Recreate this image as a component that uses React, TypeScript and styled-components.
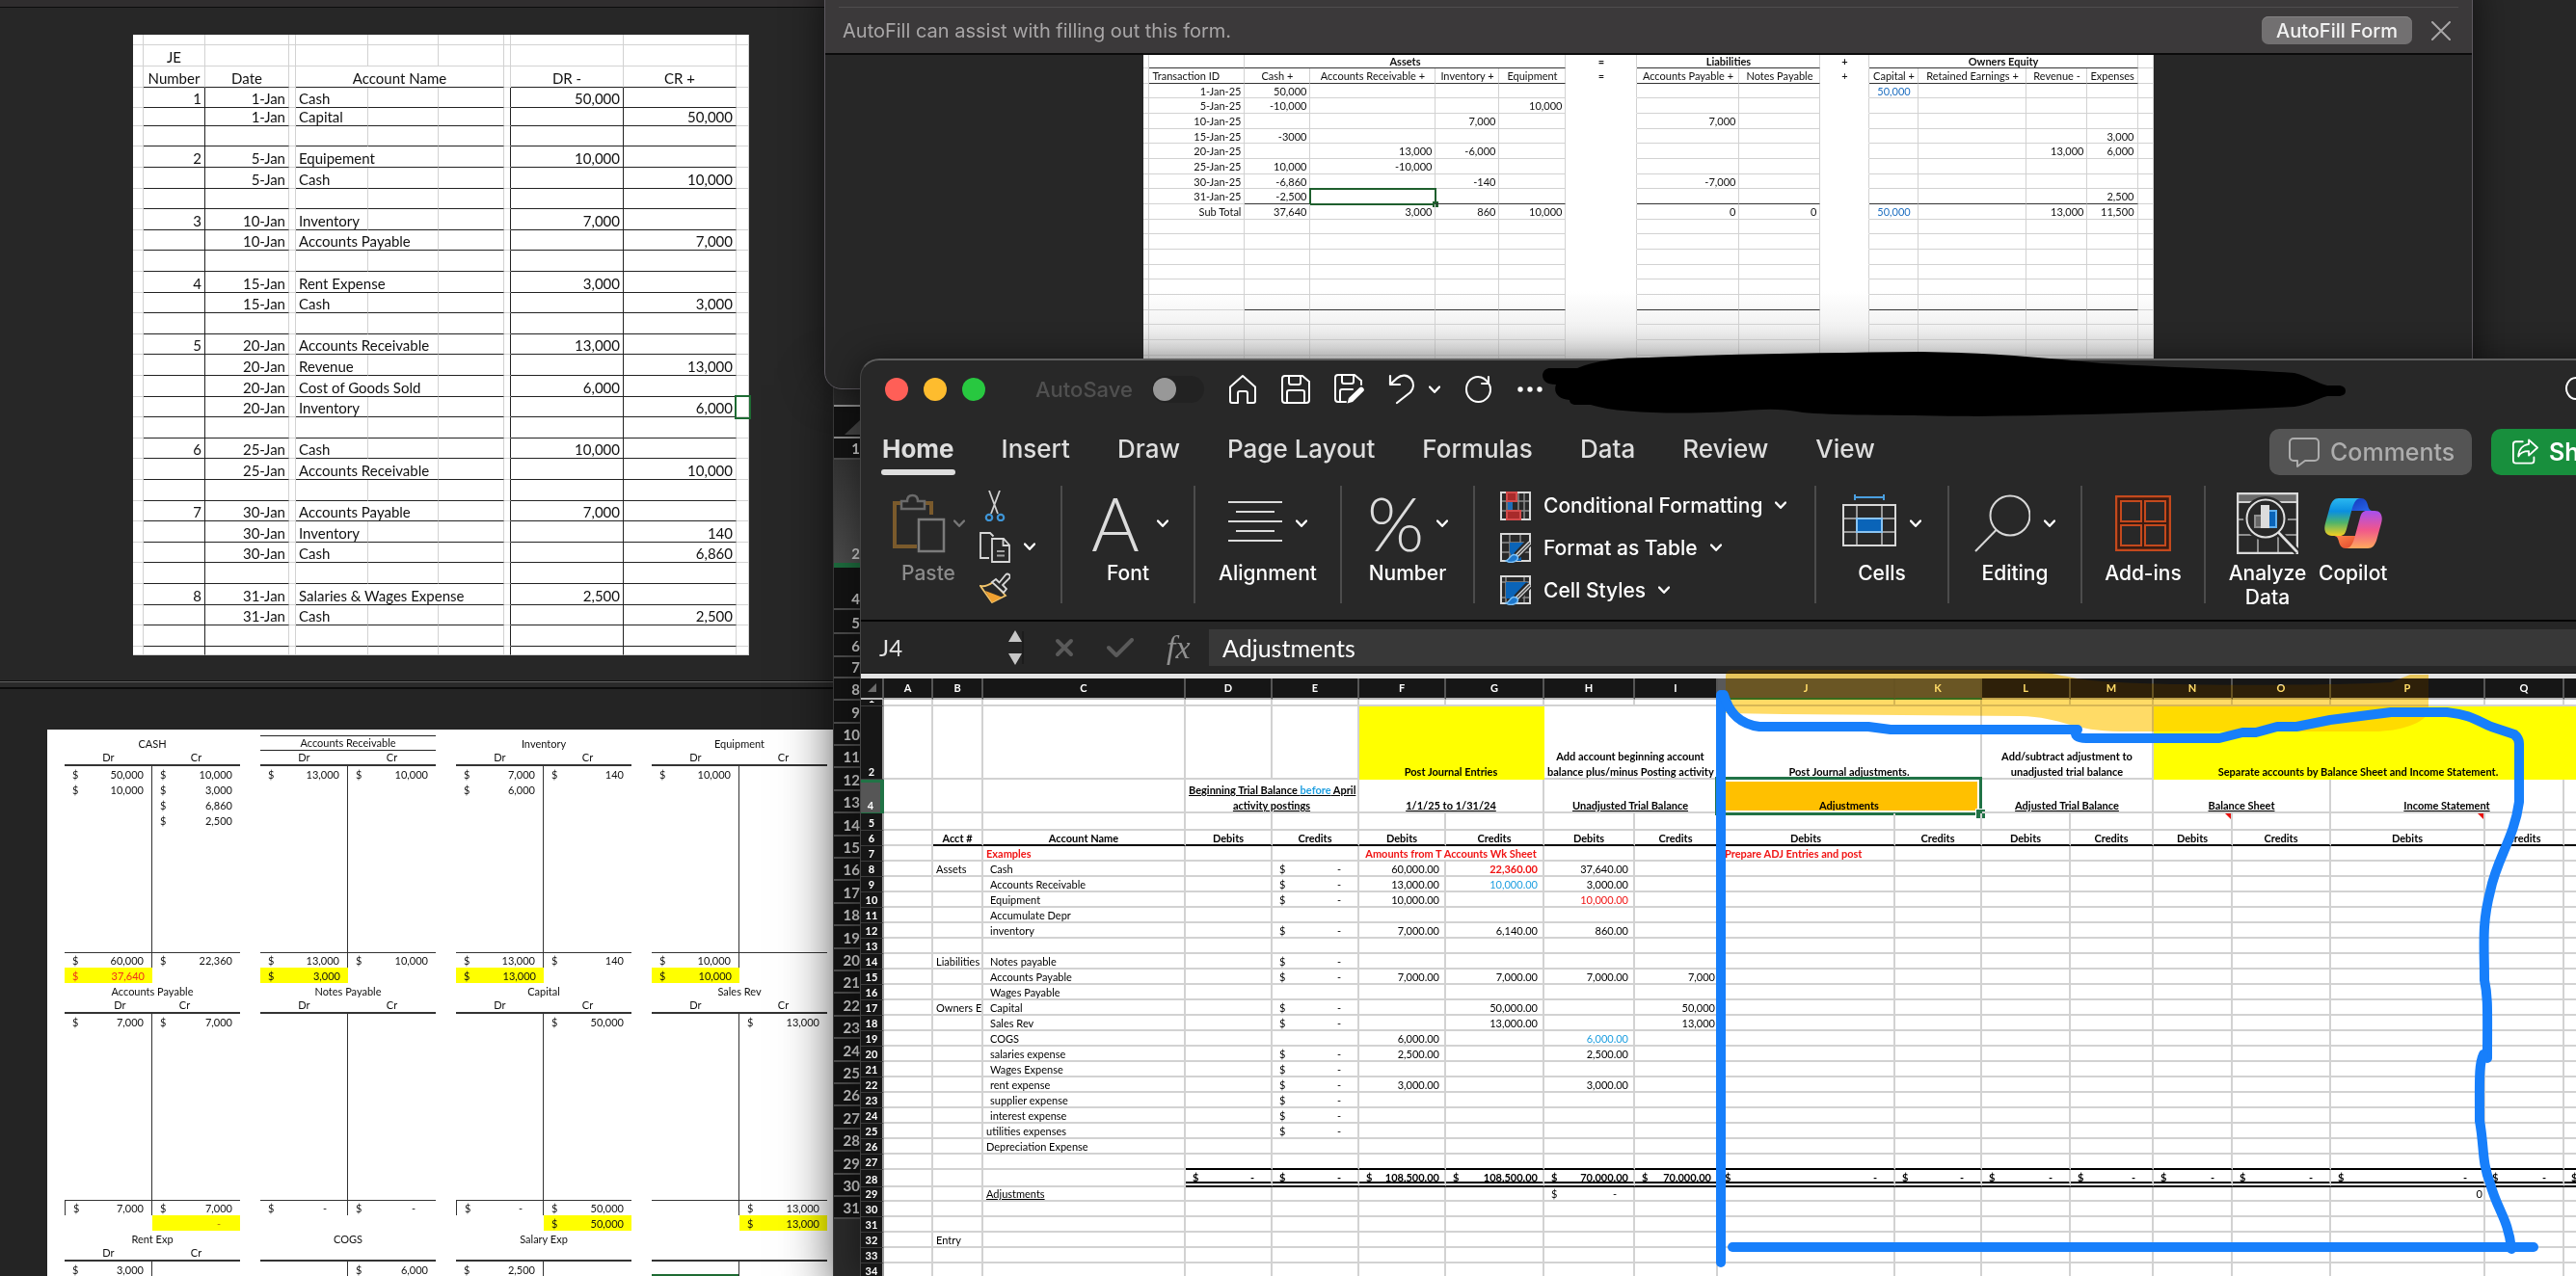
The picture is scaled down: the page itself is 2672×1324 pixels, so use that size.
import React from 'react';
import styled, { createGlobalStyle, css } from 'styled-components';

const UI = `Inter, "Liberation Sans", sans-serif`;
const SHEET = `Lato, "Open Sans", sans-serif`;
const INK = '#111';
const GRID = '#d2d2d2';

const Global = createGlobalStyle`
  *, *::before, *::after { box-sizing: border-box; }
  html, body, #root { margin: 0; height: 100%; }
  body { background: #262626; overflow: hidden; }
  button, input { font: inherit; color: inherit; border: 0; margin: 0; padding: 0; background: none; }
  table { border-collapse: separate; border-spacing: 0; table-layout: fixed; }
  th, td { padding: 0; font-weight: inherit; }
`;

/* ---------- desktop and windows ---------- */

const Desktop = styled.main`
  position: relative;
  width: 100%;
  height: 100vh;
  overflow: hidden;
  background: #272727;
  font-family: ${UI};
`;

const JournalWindow = styled.section`
  position: absolute;
  inset: 0 auto auto 0;
  width: 900px;
  height: 707px;
  padding: 29px 0 0 138px;
  background: #272727;
  border-top: 7px solid #2f2d2e;
  border-bottom: 1px solid #111;
  box-shadow: inset 0 1px 0 #0c0c0c;
`;

const AccountsWindow = styled.section`
  position: absolute;
  top: 707px;
  left: 0;
  width: 880px;
  bottom: 0;
  padding: 49px 0 0 49px;
  background: #242424;
  border-top: 1px solid #626262;
  overflow: hidden;
  &::before {
    content: '';
    position: absolute;
    inset: 0 0 auto 0;
    height: 7px;
    background: #2a2a2a;
    border-bottom: 2px solid #0c0c0c;
  }
`;

const BackSheetWindow = styled.aside`
  position: absolute;
  top: 380px;
  left: 864px;
  width: 200px;
  bottom: 0;
  padding-top: 40px;
  background: #2a2a2a;
  border-left: 1px solid #3a3a3a;
  box-shadow: 0 20px 50px rgba(0, 0, 0, 0.6);
`;

const BrowserWindow = styled.section`
  position: absolute;
  top: -20px;
  left: 855px;
  right: 107px;
  height: 424px;
  padding-top: 19px;
  background: #272727;
  border: 1px solid #5d5960;
  border-radius: 18px;
  overflow: hidden;
  box-shadow: 0 0 40px rgba(0, 0, 0, 0.6);
`;

const ExcelWindow = styled.section`
  position: absolute;
  top: 372px;
  left: 892px;
  right: -60px;
  bottom: 0;
  background: #282828;
  border-top: 2px solid #5f5f5f;
  border-left: 1px solid #444;
  border-radius: 20px 0 0 0;
  box-shadow: 0 0 34px rgba(0, 0, 0, 0.45);
`;

/* ---------- shared table parts ---------- */

const Col = styled.col<{ $w?: number }>`
  width: ${(p) => (p.$w ? `${p.$w}px` : 'auto')};
`;

const Cols = ({ widths }: { widths: (number | undefined)[] }) => (
  <colgroup>
    {widths.map((w, i) => (
      <Col key={i} $w={w} />
    ))}
  </colgroup>
);

/* ---------- journal ---------- */

const JournalTable = styled.table`
  width: 639px;
  background: #fff;
  color: ${INK};
  font: 15px/18px ${SHEET};
  tbody tr { height: 22px; }
  tbody tr:nth-child(5n + 1), tbody tr:nth-child(5n + 3) { height: 21px; }
  tbody tr:nth-child(2) { height: 19px; }
`;

const ThinRow = styled.tr<{ $h: number }>`
  &&&& { height: ${(p) => p.$h}px; }
`;

const JCell = styled.td<{ $dark?: boolean; $right?: boolean; $align?: string; $pick?: boolean }>`
  padding: 0 3px;
  white-space: nowrap;
  vertical-align: bottom;
  text-align: ${(p) => p.$align || 'left'};
  border-bottom: 1px solid ${(p) => (p.$dark ? '#222' : GRID)};
  border-right: 1px solid ${(p) => (p.$right ? '#222' : GRID)};
  outline: ${(p) => (p.$pick ? '2px solid #1e6b33' : 'none')};
`;

const journal: [string, string, string, string, string][] = [
  ['1', '1-Jan', 'Cash', '50,000', ''],
  ['', '1-Jan', 'Capital', '', '50,000'],
  ['', '', '', '', ''],
  ['2', '5-Jan', 'Equipement', '10,000', ''],
  ['', '5-Jan', 'Cash', '', '10,000'],
  ['', '', '', '', ''],
  ['3', '10-Jan', 'Inventory', '7,000', ''],
  ['', '10-Jan', 'Accounts Payable', '', '7,000'],
  ['', '', '', '', ''],
  ['4', '15-Jan', 'Rent Expense', '3,000', ''],
  ['', '15-Jan', 'Cash', '', '3,000'],
  ['', '', '', '', ''],
  ['5', '20-Jan', 'Accounts Receivable', '13,000', ''],
  ['', '20-Jan', 'Revenue', '', '13,000'],
  ['', '20-Jan', 'Cost of Goods Sold', '6,000', ''],
  ['', '20-Jan', 'Inventory', '', '6,000'],
  ['', '', '', '', ''],
  ['6', '25-Jan', 'Cash', '10,000', ''],
  ['', '25-Jan', 'Accounts Receivable', '', '10,000'],
  ['', '', '', '', ''],
  ['7', '30-Jan', 'Accounts Payable', '7,000', ''],
  ['', '30-Jan', 'Inventory', '', '140'],
  ['', '30-Jan', 'Cash', '', '6,860'],
  ['', '', '', '', ''],
  ['8', '31-Jan', 'Salaries & Wages Expense', '2,500', ''],
  ['', '31-Jan', 'Cash', '', '2,500'],
  ['', '', '', '', ''],
];

const nameSpan = (name: string) => (name.length > 20 ? 3 : name.length > 9 ? 2 : 1);

const Journal = () => (
  <JournalTable>
    <Cols widths={[11, 64, 87, 7, 75, 73, 68, 7, 117, 117, 13]} />
    <thead>
      <ThinRow $h={11}>
        {Array.from({ length: 11 }, (_, i) => (
          <JCell key={i} />
        ))}
      </ThinRow>
      <ThinRow $h={22}>
        {Array.from({ length: 11 }, (_, i) => (
          <JCell key={i} $align="center">{i === 1 ? 'JE' : ''}</JCell>
        ))}
      </ThinRow>
      <ThinRow $h={22}>
        <JCell />
        <JCell as="th" $dark $align="center">Number</JCell>
        <JCell as="th" $dark $align="center">Date</JCell>
        <JCell />
        <JCell as="th" $dark $align="center" colSpan={3}>Account Name</JCell>
        <JCell />
        <JCell as="th" $dark $align="center">DR -</JCell>
        <JCell as="th" $dark $align="center">CR +</JCell>
        <JCell />
      </ThinRow>
    </thead>
    <tbody>
      {journal.map(([num, date, name, dr, cr], i) => (
        <tr key={i}>
          <JCell />
          <JCell $dark $right $align="right">{num}</JCell>
          <JCell $dark $align="right">{date}</JCell>
          <JCell />
          <JCell $dark colSpan={nameSpan(name)}>{name}</JCell>
          {nameSpan(name) < 2 && <JCell $dark />}
          {nameSpan(name) < 3 && <JCell $dark />}
          <JCell $right />
          <JCell $dark $right $align="right">{dr}</JCell>
          <JCell $dark $align="right">{cr}</JCell>
          <JCell $pick={i === 15} />
        </tr>
      ))}
      <ThinRow $h={9}>
        <JCell />
        <JCell $right />
        <JCell />
        <JCell />
        <JCell />
        <JCell />
        <JCell />
        <JCell $right />
        <JCell $right />
        <JCell />
        <JCell />
      </ThinRow>
    </tbody>
  </JournalTable>
);

/* ---------- T accounts ---------- */

const Paper = styled.div`
  padding: 6px 0 0 18px;
  min-height: 640px;
  background: #fff;
  color: ${INK};
  font: 11px/15px ${SHEET};
`;

const AccountRow = styled.div`
  display: grid;
  grid-template-columns: repeat(4, 182px);
  column-gap: 21px;
`;

const TTable = styled.table`
  width: 182px;
  tr { height: 16px; }
`;

const TTitle = styled.th<{ $ruled?: boolean }>`
  text-align: center;
  border: 0 solid #222;
  border-width: ${(p) => (p.$ruled ? '1px 0' : 0)};
  line-height: ${(p) => (p.$ruled ? 14 : 15)}px;
`;

const Side = styled.th<{ $near?: boolean }>`
  height: 16px;
  line-height: 14px;
  text-align: center;
  border-bottom: 2px solid #333;
  &:first-child { padding-left: ${(p) => (p.$near ? 24 : 0)}px; }
  &:last-child { padding-right: ${(p) => (p.$near ? 24 : 0)}px; }
`;

const TCell = styled.td<{ $top?: boolean; $left?: boolean; $bare?: boolean; $fill?: boolean; $red?: boolean }>`
  position: relative;
  height: 16px;
  padding: 0 8px;
  border-top: ${(p) => (p.$top ? '1px solid #333' : 0)};
  border-left: ${(p) => (p.$left ? '1px solid #333' : 0)};
  background: ${(p) => (p.$fill ? '#ffff00' : 'none')};
  color: ${(p) => (p.$red ? '#f0301c' : 'inherit')};
  &:first-child { border-right: ${(p) => (p.$bare ? '0' : '1px solid #333')}; }
`;

const Filler = styled.tr<{ $h: number }>`
  && { height: ${(p) => p.$h}px; }
`;

const ActiveCell = styled.i`
  position: absolute;
  inset: 13px 0 auto 0;
  height: 18px;
  border: 2px solid #1e6b33;
`;

const Money = styled.span`
  display: flex;
  justify-content: space-between;
`;

const Amount = ({ v }: { v?: string }) =>
  v ? (
    <Money>
      <span>$</span>
      <span>{v}</span>
    </Money>
  ) : null;

type Account = {
  title: string;
  sides?: boolean;
  near?: boolean;
  ruled?: boolean;
  dr?: string[];
  cr?: string[];
  total?: [string, string];
  edge?: boolean;
  active?: boolean;
  balance?: { side: 0 | 1; v: string; red?: boolean };
};

const Dash = styled.span`
  padding-right: 13px;
`;

const AccountValue = ({ v }: { v?: string }) =>
  v === '-' ? (
    <Money>
      <span>$</span>
      <Dash>-</Dash>
    </Money>
  ) : (
    <Amount v={v} />
  );

const NilBalance = styled.div`
  padding-right: 12px;
  text-align: right;
  color: #b07410;
`;

const TAccount = ({ a, open }: { a: Account; open?: boolean }) => {
  const dr = a.dr || [];
  const cr = a.cr || [];
  const n = Math.max(dr.length, cr.length);
  return (
    <TTable>
      <thead>
        <tr><TTitle colSpan={2} $ruled={a.ruled}>{a.title}</TTitle></tr>
        <tr>
          <Side $near={a.near}>{a.sides === false ? '' : 'Dr'}</Side>
          <Side $near={a.near}>{a.sides === false ? '' : 'Cr'}</Side>
        </tr>
      </thead>
      <tbody>
        {Array.from({ length: n }, (_, i) => (
          <tr key={i}>
            <TCell><Amount v={dr[i]} /></TCell>
            <TCell><Amount v={cr[i]} /></TCell>
          </tr>
        ))}
        <Filler $h={193 - 16 * n}><TCell>{a.active && <ActiveCell />}</TCell><TCell /></Filler>
      </tbody>
      {!open && (
        <tfoot>
          <tr>
            <TCell $top $left={a.edge}><AccountValue v={a.total?.[0]} /></TCell>
            <TCell $top><AccountValue v={a.total?.[1]} /></TCell>
          </tr>
          <Filler $h={15}>
            {([0, 1] as const).map((s) => (
              <TCell key={s} $bare $fill={a.balance?.side === s} $red={a.balance?.red}>
                {a.balance?.side === s && (a.balance.v === '-' ? <NilBalance>-</NilBalance> : <Amount v={a.balance.v} />)}
              </TCell>
            ))}
          </Filler>
        </tfoot>
      )}
    </TTable>
  );
};

const accountRows: Account[][] = [
  [
    { title: 'CASH', dr: ['50,000', '10,000'], cr: ['10,000', '3,000', '6,860', '2,500'], total: ['60,000', '22,360'], balance: { side: 0, v: '37,640', red: true } },
    { title: 'Accounts Receivable', ruled: true, dr: ['13,000'], cr: ['10,000'], total: ['13,000', '10,000'], balance: { side: 0, v: '3,000' } },
    { title: 'Inventory', dr: ['7,000', '6,000'], cr: ['140'], total: ['13,000', '140'], balance: { side: 0, v: '13,000' } },
    { title: 'Equipment', dr: ['10,000'], total: ['10,000', ''], balance: { side: 0, v: '10,000' } },
  ],
  [
    { title: 'Accounts Payable', near: true, dr: ['7,000'], cr: ['7,000'], total: ['7,000', '7,000'], edge: true, balance: { side: 1, v: '-' } },
    { title: 'Notes Payable', total: ['-', '-'] },
    { title: 'Capital', cr: ['50,000'], total: ['-', '50,000'], edge: true, balance: { side: 1, v: '50,000' } },
    { title: 'Sales Rev', cr: ['13,000'], total: ['', '13,000'], balance: { side: 1, v: '13,000' } },
  ],
  [
    { title: 'Rent Exp', dr: ['3,000'] },
    { title: 'COGS', sides: false, cr: ['6,000'] },
    { title: 'Salary Exp', sides: false, dr: ['2,500'] },
    { title: '', sides: false, active: true },
  ],
];

/* ---------- browser ---------- */

const AutoFillBar = styled.div`
  display: flex;
  align-items: center;
  gap: 20px;
  height: 57px;
  padding: 8px 22px 0 18px;
  background: #3b393a;
  border-bottom: 2px solid #0b0b0b;
  color: #a8a6a7;
  font-size: 20px;
  p { flex: 1; margin: 0; }
`;

const BarRule = styled.div`
  height: 1px;
  margin: 7px 14px -8px 14px;
  background: #4f4d4e;
  position: relative;
`;

const AutoFillButton = styled.button`
  height: 29px;
  padding: 0 15px;
  border-radius: 7px;
  background: #727071;
  box-shadow: inset 0 1px 0 #858384;
  color: #f2f2f2;
  font-weight: 500;
  font-size: 20px;
`;

const PageArea = styled.div`
  display: flex;
  justify-content: center;
`;

const LedgerTable = styled.table`
  width: 1047px;
  background: linear-gradient(#fff 75%, #e2e2e2);
  color: ${INK};
  font: 11px/13px ${SHEET};
  tr { height: 16px; }
  tbody tr:nth-child(3n + 1) { height: 15px; }
`;

const LCell = styled.td<{ $align?: string; $dark?: boolean; $bold?: boolean; $open?: boolean; $blue?: boolean }>`
  position: relative;
  padding: 0 3px;
  white-space: nowrap;
  text-align: ${(p) => p.$align || 'right'};
  font-weight: ${(p) => (p.$bold ? 700 : 400)};
  color: ${(p) => (p.$blue ? '#1f6fc0' : 'inherit')};
  border-right: 1px solid ${GRID};
  border-bottom: 1px solid ${(p) => (p.$dark ? '#333' : p.$open ? 'transparent' : GRID)};
`;

const Picked = styled.span`
  position: absolute;
  inset: -1px -2px -2px -1px;
  border: 2px solid #1f5f2e;
  &::after {
    content: '';
    position: absolute;
    right: -4px;
    bottom: -4px;
    width: 6px;
    height: 6px;
    background: #1f5f2e;
  }
`;

const ledgerHeads = ['', 'Transaction ID', 'Cash +', 'Accounts Receivable +', 'Inventory +', 'Equipment', '=', 'Accounts Payable +', 'Notes Payable', '+', 'Capital +', 'Retained Earnings +', 'Revenue -', 'Expenses', ''];

const ledger: Record<number, string>[] = [
  { 1: '1-Jan-25', 2: '50,000', 10: '50,000' },
  { 1: '5-Jan-25', 2: '-10,000', 5: '10,000' },
  { 1: '10-Jan-25', 4: '7,000', 7: '7,000' },
  { 1: '15-Jan-25', 2: '-3000', 13: '3,000' },
  { 1: '20-Jan-25', 3: '13,000', 4: '-6,000', 12: '13,000', 13: '6,000' },
  { 1: '25-Jan-25', 2: '10,000', 3: '-10,000' },
  { 1: '30-Jan-25', 2: '-6,860', 4: '-140', 7: '-7,000' },
  { 1: '31-Jan-25', 2: '-2,500', 13: '2,500' },
  { 1: 'Sub Total', 2: '37,640', 3: '3,000', 4: '860', 5: '10,000', 7: '0', 8: '0', 10: '50,000', 12: '13,000', 13: '11,500' },
  ...Array.from({ length: 10 }, () => ({})),
];

const gapCol = (c: number) => c === 6 || c === 9;
const amountCol = (c: number) => c > 1 && c < 14 && !gapCol(c);

const Ledger = () => (
  <LedgerTable>
    <Cols widths={[6, 99, 68, 130, 66, 69, 74, 106, 84, 51, 51, 112, 63, 52, 16]} />
    <thead>
      <ThinRow $h={14}>
        <LCell />
        <LCell $dark />
        <LCell as="th" $dark $bold $align="center" colSpan={4}>Assets</LCell>
        <LCell as="th" $bold $align="center" $open>=</LCell>
        <LCell as="th" $dark $bold $align="center" colSpan={2}>Liabilities</LCell>
        <LCell as="th" $bold $align="center" $open>+</LCell>
        <LCell as="th" $dark $bold $align="center" colSpan={4}>Owners Equity</LCell>
        <LCell />
      </ThinRow>
      <tr>
        {ledgerHeads.map((h, c) => (
          <LCell key={c} as="th" $align={c === 1 ? 'left' : 'center'} $dark={c === 1 || amountCol(c)} $open={gapCol(c)}>{h}</LCell>
        ))}
      </tr>
    </thead>
    <tbody>
      {ledger.map((row, r) => (
        <tr key={r}>
          {ledgerHeads.map((_, c) => (
            <LCell key={c} $open={gapCol(c)} $blue={c === 10} $align={c === 10 ? 'center' : 'right'} $dark={(r === 7 || r === 14) && amountCol(c)}>
              {row[c]}
              {r === 7 && c === 3 && <Picked />}
            </LCell>
          ))}
        </tr>
      ))}
    </tbody>
  </LedgerTable>
);

/* ---------- row headers of the sheet behind ---------- */

const Strip = styled.table`
  width: 27px;
  background: #131313;
  color: #c6c6c6;
  font: 700 15px/20px ${SHEET};
  text-align: right;
  border-top: 2px solid #9a9a9a;
  tr { height: 23px; }
  tr:nth-child(5n), tr:nth-child(5n + 2) { height: 24px; }
`;

const StripRow = styled.tr<{ $h: number }>`
  &&&& { height: ${(p) => p.$h}px; }
`;

const StripCell = styled.th<{ $on?: boolean; $rule?: string }>`
  vertical-align: bottom;
  background: ${(p) => (p.$on ? 'linear-gradient(#333, #4a4a4a)' : 'none')};
  border-bottom: ${(p) => (p.$on ? '5px solid #1d6a3d' : p.$rule || '2px solid #4a4a4a')};
`;

const Corner = styled.svg`
  display: block;
  margin: 12px 0 2px auto;
`;

/* ---------- Excel chrome ---------- */

const TitleBar = styled.header`
  display: flex;
  align-items: center;
  height: 60px;
  padding: 0 42px 0 25px;
  color: #fff;
`;

const Lights = styled.div`
  display: flex;
  gap: 16px;
`;

const Light = styled.button<{ $c: string }>`
  width: 24px;
  height: 24px;
  border-radius: 50%;
  background: ${(p) => p.$c};
`;

const AutoSave = styled.label`
  display: flex;
  align-items: center;
  gap: 20px;
  margin-left: 52px;
  color: #505050;
  font-size: 22px;
  font-weight: 500;
`;

const Toggle = styled.input`
  appearance: none;
  width: 54px;
  height: 28px;
  padding: 2px 1px;
  border-radius: 14px;
  background: #222;
  &::before {
    content: '';
    display: block;
    width: 24px;
    height: 24px;
    border-radius: 50%;
    background: #989898;
  }
`;

const QuickBar = styled.div`
  display: flex;
  align-items: center;
  gap: 25px;
  margin-left: 25px;
  flex: 1;
`;

const IconButton = styled.button`
  display: flex;
  align-items: center;
  gap: 14px;
`;

const Tabs = styled.nav`
  display: flex;
  align-items: center;
  gap: 49px;
  height: 70px;
  padding: 0 18px 0 22px;
`;

const Tab = styled.button<{ $on?: boolean }>`
  position: relative;
  padding-bottom: 6px;
  color: #dedede;
  font-size: 26px;
  line-height: 30px;
  white-space: nowrap;
  font-weight: ${(p) => (p.$on ? 700 : 500)};
  &::after {
    content: '';
    display: ${(p) => (p.$on ? 'block' : 'none')};
    position: absolute;
    inset: auto -1px -6px -1px;
    height: 6px;
    border-radius: 3px;
    background: #dedede;
  }
`;

const TabActions = styled.div`
  display: flex;
  gap: 20px;
  margin-left: auto;
`;

const PillButton = styled.button<{ $green?: boolean }>`
  display: flex;
  align-items: center;
  gap: 11px;
  height: 48px;
  width: ${(p) => (p.$green ? 130 : 210)}px;
  padding-left: ${(p) => (p.$green ? 22 : 20)}px;
  border-radius: 10px;
  background: ${(p) => (p.$green ? '#188f3d' : '#545454')};
  color: ${(p) => (p.$green ? '#fff' : '#adadad')};
  font-size: 25px;
  font-weight: ${(p) => (p.$green ? 600 : 500)};
`;

const Ribbon = styled.div`
  display: flex;
  height: 141px;
  padding-bottom: 17px;
  border-bottom: 2px solid #050505;
  color: #fff;
  font-size: 21px;
  line-height: 25px;
`;

const Group = styled.div<{ $w?: number }>`
  display: flex;
  justify-content: center;
  width: ${(p) => (p.$w ? `${p.$w}px` : 'auto')};
  padding-left: ${(p) => (p.$w ? 0 : 11)}px;
  border-right: ${(p) => (p.$w ? '2px solid #4c4c4c' : 0)};
`;

const BigButton = styled.button<{ $dim?: boolean; $w?: number }>`
  display: flex;
  flex-direction: column;
  align-items: center;
  align-self: flex-start;
  width: ${(p) => (p.$w ? `${p.$w}px` : 'auto')};
  padding-top: 4px;
  color: ${(p) => (p.$dim ? '#8b8b8b' : '#fff')};
  font-weight: 500;
`;

const BigIcon = styled.span<{ $tight?: boolean }>`
  display: flex;
  align-items: center;
  gap: ${(p) => (p.$tight ? 8 : 14)}px;
  height: 70px;
  margin-bottom: 4px;
`;

const Glyph = styled.span`
  width: 58px;
  text-align: center;
  font: 300 76px/70px ${SHEET};
  color: #dcdcdc;
`;

const PasteGroup = styled(Group)`
  justify-content: flex-start;
  padding-left: 32px;
  gap: 15px;
`;

const ClipTools = styled.div`
  display: flex;
  flex-direction: column;
  justify-content: space-between;
  padding-top: 5px;
`;

const StyleGroup = styled(Group)`
  flex-direction: column;
  gap: 13px;
  align-items: flex-start;
  padding: 7px 0 0 26px;
`;

const StyleButton = styled.button`
  display: flex;
  align-items: center;
  gap: 13px;
  height: 32px;
  font-weight: 500;
`;

const FormulaBar = styled.div`
  display: flex;
  align-items: center;
  height: 54px;
  background: #262626;
  border-bottom: 1px solid #111;
`;

const NameBox = styled.input`
  width: 134px;
  margin-left: 19px;
  color: #e2e2e2;
  font: 24px/30px ${SHEET};
`;

const FormulaIcons = styled.div`
  display: flex;
  align-items: center;
  gap: 34px;
  width: 194px;
  padding-left: 32px;
  border-left: 2px solid #1c1c1c;
  color: #5a5a5a;
`;

const Fx = styled.span`
  font: italic 34px/34px "Liberation Serif", serif;
  color: #8f8f8f;
`;

const FormulaInput = styled.input`
  flex: 1;
  height: 38px;
  padding-left: 14px;
  background: #383838;
  color: #fff;
  font: 25px/30px ${SHEET};
`;

/* ---------- sheet ---------- */

const SheetArea = styled.div`
  border-top: 5px solid #e4e4e4;
`;

const SheetTable = styled.table`
  width: 100%;
  background: #fff;
  color: #000;
  font: 11px/12px ${SHEET};
`;

const HeadCell = styled.th<{ $on?: boolean }>`
  height: 22px;
  background: ${(p) => (p.$on ? '#595959' : '#161616')};
  color: #fff;
  font-weight: 700;
  text-align: center;
  border-right: 2px solid #555;
  border-bottom: 2px solid ${(p) => (p.$on ? '#217346' : '#b5b5b5')};
`;

const NumCell = styled.th<{ $on?: boolean }>`
  background: ${(p) => (p.$on ? '#565656' : '#161616')};
  color: #fff;
  font-weight: 700;
  text-align: center;
  vertical-align: bottom;
  line-height: 14px;
  border-right: 2px solid ${(p) => (p.$on ? '#217346' : '#9b9b9b')};
  border-bottom: 1px solid ${(p) => (p.$on ? '#217346' : '#3d3d3d')};
  ${(p) => p.$on && css`border-top: 3px solid #217346; border-right-width: 4px;`}
`;

const Clip = styled.div<{ $h: number }>`
  display: flex;
  align-items: flex-end;
  justify-content: center;
  height: ${(p) => p.$h}px;
  overflow: hidden;
`;

const SRow = styled.tr<{ $h: number }>`
  height: ${(p) => p.$h}px;
`;

type Kind = { bold?: boolean; red?: boolean; blue?: boolean; under?: boolean; center?: boolean; right?: number; left?: number; fill?: string; span?: number; money?: boolean; note?: boolean; pick?: boolean };

const SCell = styled.td<{ $k: Kind; $rule?: string }>`
  position: relative;
  overflow: hidden;
  white-space: nowrap;
  vertical-align: bottom;
  padding: 0 ${(p) => p.$k.right ?? 3}px 0 ${(p) => p.$k.left ?? 3}px;
  text-align: ${(p) => (p.$k.center ? 'center' : p.$k.right ? 'right' : 'left')};
  font-weight: ${(p) => (p.$k.bold ? 700 : 400)};
  color: ${(p) => (p.$k.red ? '#f01414' : p.$k.blue ? '#1f9fe0' : 'inherit')};
  text-decoration: ${(p) => (p.$k.under ? 'underline' : 'none')};
  background: ${(p) => p.$k.fill || 'none'};
  border-right: 2px solid ${(p) => (p.$k.fill ? 'transparent' : GRID)};
  border-bottom: ${(p) => p.$rule || `2px solid ${p.$k.fill ? 'transparent' : GRID}`};
  line-height: ${(p) => (p.$rule?.includes('double') ? 8 : 12)}px;
  ${(p) => p.$k.pick && css`overflow: visible;`}
`;

const Lines = styled.div`
  line-height: 16px;
  margin-bottom: -2px;
  span { color: #1f9fe0; }
`;

const NoteMark = styled.i`
  position: absolute;
  top: 0;
  right: 0;
  border: solid transparent;
  border-width: 0 0 6px 6px;
  border-top: 0;
  border-right: 6px solid #e8110f;
  border-left: 0;
`;

const Selection = styled.i`
  position: absolute;
  inset: -3px -2px -4px -3px;
  border: 3px solid #217346;
  box-shadow: inset 0 0 0 2px #fff;
  &::after {
    content: '';
    position: absolute;
    right: -6px;
    bottom: -6px;
    width: 10px;
    height: 10px;
    background: #217346;
    border: solid #fff;
    border-width: 1px 0 0 1px;
  }
`;

type Val = string | [React.ReactNode, Kind];
const L = 'ABCDEFGHIJKLMNOPQR'.split('');
const colWidths = [24, 51, 52, 210, 90, 90, 90, 102, 94, 86, 184, 90, 92, 86, 82, 102, 160, 82, undefined];

const n = (v: string, k: Kind = {}): Val => [v, { right: 5, ...k }];
const dash: Val = ['-', { money: true, left: 7, right: 17 }];
const tot = (v = '-'): Val => [v, { money: true, bold: true, left: 7, right: v === '-' ? 17 : 5 }];
const c = (v: string): Val => [v, { left: 7 }];
const head = (v: React.ReactNode, k: Kind = {}): Val => [v, { bold: true, center: true, span: 2, ...k }];

const SHEET_ROWS: { no: number; h: number; cells: Record<string, Val> }[] = [
  { no: 1, h: 7, cells: {} },
  {
    no: 2, h: 76, cells: {
      F: head('Post Journal Entries', { fill: '#ffff00' }),
      H: head(<Lines>Add account beginning account<br />balance plus/minus Posting activity</Lines>),
      J: head('Post Journal adjustments.'),
      L: head(<Lines>Add/subtract adjustment to<br />unadjusted trial balance</Lines>),
      N: head('Separate accounts by Balance Sheet and Income Statement.', { fill: '#ffff00', span: 4 }),
      R: ['', { fill: '#ffff00' }],
    },
  },
  {
    no: 4, h: 35, cells: {
      D: head(<Lines>Beginning Trial Balance <span>before</span> April<br />activity postings</Lines>, { under: true }),
      F: head('1/1/25 to 1/31/24', { under: true }),
      H: head('Unadjusted Trial Balance', { under: true }),
      J: head('Adjustments', { fill: '#ffc000', pick: true }),
      L: head('Adjusted Trial Balance', { under: true }),
      N: head('Balance Sheet', { under: true }),
      P: head('Income Statement', { under: true }),
    },
  },
  { no: 5, h: 18, cells: { N: ['', { note: true }], P: ['', { note: true }] } },
  {
    no: 6, h: 16, cells: {
      B: head('Acct #', { span: 1 }),
      C: head('Account Name', { span: 1 }),
      ...Object.fromEntries('DEFGHIJKLMNOPQ'.split('').map((l, i) => [l, head(i % 2 ? 'Credits' : 'Debits', { span: 1 })])),
    },
  },
  { no: 7, h: 16, cells: { C: ['Examples', { bold: true, red: true }], F: head('Amounts from T Accounts Wk Sheet', { red: true }), J: ['Prepare ADJ Entries and post', { bold: true, red: true, left: 7 }] } },
  { no: 8, h: 16, cells: { B: 'Assets', C: c('Cash'), E: dash, F: n('60,000.00'), G: n('22,360.00', { bold: true, red: true }), H: n('37,640.00') } },
  { no: 9, h: 16, cells: { C: c('Accounts Receivable'), E: dash, F: n('13,000.00'), G: n('10,000.00', { blue: true }), H: n('3,000.00') } },
  { no: 10, h: 16, cells: { C: c('Equipment'), E: dash, F: n('10,000.00'), H: n('10,000.00', { red: true }) } },
  { no: 11, h: 16, cells: { C: c('Accumulate Depr') } },
  { no: 12, h: 16, cells: { C: c('inventory'), E: dash, F: n('7,000.00'), G: n('6,140.00'), H: n('860.00') } },
  { no: 13, h: 16, cells: {} },
  { no: 14, h: 16, cells: { B: 'Liabilities', C: c('Notes payable'), E: dash } },
  { no: 15, h: 16, cells: { C: c('Accounts Payable'), E: dash, F: n('7,000.00'), G: n('7,000.00'), H: n('7,000.00'), I: n('7,000', { right: 1 }) } },
  { no: 16, h: 16, cells: { C: c('Wages Payable') } },
  { no: 17, h: 16, cells: { B: 'Owners Equity', C: c('Capital'), E: dash, G: n('50,000.00'), I: n('50,000', { right: 1 }) } },
  { no: 18, h: 16, cells: { C: c('Sales Rev'), E: dash, G: n('13,000.00'), I: n('13,000', { right: 1 }) } },
  { no: 19, h: 16, cells: { C: c('COGS'), F: n('6,000.00'), H: n('6,000.00', { blue: true }) } },
  { no: 20, h: 16, cells: { C: c('salaries expense'), E: dash, F: n('2,500.00'), H: n('2,500.00') } },
  { no: 21, h: 16, cells: { C: c('Wages Expense'), E: dash } },
  { no: 22, h: 16, cells: { C: c('rent expense'), E: dash, F: n('3,000.00'), H: n('3,000.00') } },
  { no: 23, h: 16, cells: { C: c('supplier expense'), E: dash } },
  { no: 24, h: 16, cells: { C: c('interest expense'), E: dash } },
  { no: 25, h: 16, cells: { C: 'utilities expenses', E: dash } },
  { no: 26, h: 16, cells: { C: 'Depreciation Expense' } },
  { no: 27, h: 16, cells: {} },
  {
    no: 28, h: 18, cells: {
      D: tot(), E: tot(), F: tot('108,500.00'), G: tot('108,500.00'), H: tot('70,000.00'), I: tot('70,000.00'),
      J: tot(), K: tot(), L: tot(), M: tot(), N: tot(), O: tot(), P: tot(), Q: tot(), R: tot(),
    },
  },
  { no: 29, h: 15, cells: { C: ['Adjustments', { under: true }], H: dash, P: n('0', { right: 1 }) } },
  { no: 30, h: 16, cells: {} },
  { no: 31, h: 16, cells: {} },
  { no: 32, h: 16, cells: { B: 'Entry' } },
  { no: 33, h: 16, cells: {} },
  { no: 34, h: 16, cells: {} },
];

const ruleFor = (no: number, col: number) => {
  if (no === 6 && col > 0) return '2px solid #000';
  if (no === 27 && col > 2) return '2px solid #000';
  if (no === 28 && col > 2) return '6px double #000';
  return undefined;
};

const SheetRow = ({ row }: { row: (typeof SHEET_ROWS)[number] }) => {
  const out: React.ReactNode[] = [];
  for (let i = 0; i < L.length; ) {
    const v = row.cells[L[i]];
    const [text, k]: [React.ReactNode, Kind] = Array.isArray(v) ? v : [v ?? '', {}];
    out.push(
      <SCell key={i} $k={k} colSpan={k.span || 1} $rule={ruleFor(row.no, i)}>
        {k.money ? <Money><span>$</span><span>{text}</span></Money> : text}
        {k.note && <NoteMark />}
        {k.pick && <Selection />}
      </SCell>
    );
    i += k.span || 1;
  }
  return (
    <SRow $h={row.h}>
      <NumCell $on={row.no === 4}>{row.no === 1 ? <Clip $h={5}>{row.no}</Clip> : row.no}</NumCell>
      {out}
    </SRow>
  );
};

const Sheet = () => (
  <SheetArea>
    <SheetTable>
      <Cols widths={colWidths} />
      <thead>
        <tr>
          <HeadCell aria-label="Select all">
            <svg width="9" height="9" viewBox="0 0 9 9"><path d="M9 0V9H0Z" fill="#6a6a6a" /></svg>
          </HeadCell>
          {L.map((l) => (
            <HeadCell key={l} $on={l === 'J' || l === 'K'}>{l}</HeadCell>
          ))}
        </tr>
      </thead>
      <tbody>
        {SHEET_ROWS.map((r) => (
          <SheetRow key={r.no} row={r} />
        ))}
      </tbody>
    </SheetTable>
  </SheetArea>
);

/* ---------- icons ---------- */

const Chevron = ({ dim }: { dim?: boolean }) => (
  <svg width="12" height="9" viewBox="0 0 12 9" fill="none" stroke={dim ? '#777' : '#fff'} strokeWidth="2.4">
    <path d="M1 1.5 6 6.8 11 1.5" strokeLinecap="round" strokeLinejoin="round" />
  </svg>
);

const Line = ({ w, h, d, sw = 2 }: { w: number; h: number; d: string; sw?: number }) => (
  <svg width={w} height={h} viewBox={`0 0 ${w} ${h}`} fill="none" stroke="currentColor" strokeWidth={sw} strokeLinecap="round" strokeLinejoin="round">
    <path d={d} />
  </svg>
);

const HomeIcon = () => <Line w={30} h={32} d="M2 13.5 15 2 28 13.5V28a2 2 0 0 1-2 2H20V20a2 2 0 0 0-2-2H12a2 2 0 0 0-2 2V30H4a2 2 0 0 1-2-2Z" />;
const SaveIcon = () => <Line w={30} h={30} d="M1 4a3 3 0 0 1 3-3H22L29 7V26a3 3 0 0 1-3 3H4a3 3 0 0 1-3-3ZM8 1V8a2 2 0 0 0 2 2H18a2 2 0 0 0 2-2V1M6 29V18a2 2 0 0 1 2-2H22a2 2 0 0 1 2 2V29" />;
const SaveEditIcon = () => (
  <svg width="31" height="32" viewBox="0 0 31 32" fill="none" stroke="#fff" strokeWidth="2" strokeLinecap="round" strokeLinejoin="round">
    <path d="M28 11V7L21 1H4a3 3 0 0 0-3 3V26a3 3 0 0 0 3 3H12M8 1V8a2 2 0 0 0 2 2H18a2 2 0 0 0 2-2V1M6 29V18a2 2 0 0 1 2-2H19" />
    <path d="M13.5 30.500 15 25 26 14.500a2.700 2.700 0 0 1 4 3.800L19 29Z" fill="#fff" stroke="none" />
  </svg>
);
const UndoIcon = () => <Line w={28} h={32} d="M2 2V11H12M2 11 9 4.500C14 0 20 1 23.500 5 27 9.500 26.500 15 23 19L9 30" sw={2.2} />;
const RedoIcon = () => <Line w={30} h={30} d="M25 2V9H18M25 9C22 4 18 2 14 2 7 2 2 8 2 15s5.500 13 12.500 13S27 22 27 15C27 13 26.500 11 25.500 9.500" />;
const MoreIcon = () => (
  <svg width="26" height="6" viewBox="0 0 26 6" fill="#fff"><circle cx="3" cy="3" r="2.700" /><circle cx="13" cy="3" r="2.700" /><circle cx="23" cy="3" r="2.700" /></svg>
);
const SearchIcon = () => <Line w={30} h={32} d="M12 4a10 11 0 1 0 .1 0M19 24 28 31" />;

const PasteIcon = () => (
  <svg width="56" height="62" viewBox="0 0 56 62" fill="none" strokeWidth="2.500">
    <path d="M11 10H3V55H26M34 10H41V22" stroke="#7a5a2c" strokeWidth="4" />
    <path d="M10 16V8H16C16 4 18 2 21.500 2S27 4 27 8H34V16Z" stroke="#6a6a6a" />
    <path d="M28 27H54V60H28Z" stroke="#7b7b7b" fill="#282828" />
  </svg>
);
const CutIcon = () => (
  <svg width="32" height="32" viewBox="0 0 32 32" fill="none" strokeWidth="1.800">
    <path d="M10 0 19 24M21 0 12 24" stroke="#d0d0d0" />
    <circle cx="10" cy="28" r="3.200" stroke="#3f95d6" strokeWidth="2.200" />
    <circle cx="22" cy="28" r="3.200" stroke="#3f95d6" strokeWidth="2.200" />
  </svg>
);
const CopyIcon = () => (
  <svg width="32" height="32" viewBox="0 0 32 32" fill="none" stroke="#d8d8d8" strokeWidth="1.800">
    <path d="M10 27H1V1H11L14.500 4.500" />
    <path d="M13 7H25L31 13.500V31H13ZM24.500 7V14H31" />
    <path d="M18 20H26M18 24.500H26" stroke="#a0a0a0" />
  </svg>
);
const BrushIcon = () => (
  <svg width="32" height="32" viewBox="0 0 32 32" fill="none" strokeWidth="1.800">
    <path d="M14 10 27 24 13 31 1 14C6 15 10 13 14 10Z" stroke="#f0c36a" />
    <path d="M6 19 23 25.500 13 31Z" fill="#f0a030" />
    <path d="M13 10 17 7 20.500 10.500 27 2.500a2.500 2.500 0 0 1 4 3.500L24 13 28 17 25 21Z" stroke="#d8d8d8" fill="#282828" />
  </svg>
);
const AlignIcon = () => (
  <svg width="56" height="56" viewBox="0 0 56 56" stroke="#dcdcdc" strokeWidth="2"><path d="M0 6H56M8 16H48M0 26H56M8 36H48M0 46H56" /></svg>
);
const CondIcon = () => (
  <svg width="32" height="30" viewBox="0 0 32 30" fill="none" strokeWidth="2">
    <path d="M1 10H31M1 20H31M7 1V29M19 1V29M25 1V29" stroke="#8a8a8a" strokeWidth="1.500" />
    <path d="M1 1H31V29H1Z" stroke="#d8d8d8" />
    <path d="M7 1H17V10H7ZM7 20H21V29H7Z" fill="#a82a2a" stroke="#d34b4b" />
    <path d="M8 11H13V19H8Z" fill="#1e6db8" />
  </svg>
);
const TableBrushIcon = ({ full }: { full?: boolean }) => (
  <svg width="32" height="31" viewBox="0 0 32 31" fill="none" strokeWidth="2">
    <path d={full ? 'M1 7H31M1 23H31M6 1V29M25 1V29' : 'M1 10H31M1 20H31M10 1V29M21 1V29'} stroke="#8a8a8a" strokeWidth="1.500" />
    <path d="M1 1H31V29H1Z" stroke="#d8d8d8" />
    <path d={full ? 'M6 7H29L17 24H6Z' : 'M10 10H29L22 20V29H15L10 20Z'} fill="#0a64b8" />
    <path d="M30 10 17 24" stroke="#282828" strokeWidth="8" />
    <path d="M31 10 17 24" stroke="#d8d8d8" strokeWidth="4" />
    <path d="M31 10 18 23" stroke="#444" strokeWidth="1.400" />
    <path d="M6 29C10 28 10 23 14 22.500 18 22 20 26 17 28.500 14 31 9 31 6 29Z" fill="#1e78cc" stroke="#7cc0f5" strokeWidth="1.500" />
  </svg>
);
const CellsIcon = () => (
  <svg width="56" height="62" viewBox="0 0 56 62" fill="none" strokeWidth="2">
    <path d="M13 4H43M13 1V7M43 1V7" stroke="#4a9fe0" />
    <path d="M1 26H55M1 40H55M15 12V54M41 12V54" stroke="#9a9a9a" />
    <path d="M1 12H55V54H1Z" stroke="#d8d8d8" />
    <path d="M15 26H41V40H15Z" fill="#0a64b8" stroke="#8ac4f2" />
  </svg>
);
const EditIcon = () => (
  <svg width="58" height="60" viewBox="0 0 58 60" fill="none" stroke="#d8d8d8" strokeWidth="2"><circle cx="37" cy="22" r="20.500" /><path d="M22.500 37 1 59" /></svg>
);
const AddinsIcon = () => (
  <svg width="58" height="58" viewBox="0 0 58 58" fill="none" stroke="#c4491d" strokeWidth="2">
    <path d="M1 1H57V57H1Z" fill="#3a1c12" strokeWidth="2.500" />
    <path d="M6 6H27V27H6ZM31 6H52V27H31ZM6 31H27V52H6ZM31 31H52V52H31Z" fill="#282828" />
  </svg>
);
const AnalyzeIcon = () => (
  <svg width="64" height="64" viewBox="0 0 64 64" fill="none" strokeWidth="2">
    <path d="M1 1H63V10H1Z" fill="#6a6a6a" />
    <path d="M1 10H63" stroke="#cfcfcf" />
    <path d="M1 28H63M1 44H63M22 44V63M43 44V63" stroke="#8e8e8e" />
    <path d="M1 1H63V63H1Z" stroke="#dadada" strokeWidth="2.500" />
    <circle cx="30" cy="27" r="23" fill="#282828" />
    <circle cx="30" cy="27" r="19.500" stroke="#e0e0e0" />
    <path d="M44 42 63 62" stroke="#282828" strokeWidth="7" />
    <path d="M43 41 63 62" stroke="#e0e0e0" strokeWidth="2.600" />
    <path d="M19 24H26V36H19Z" fill="#666" stroke="#909090" />
    <path d="M33 19H41V36H33Z" fill="#0a64b8" stroke="#5fb0f0" />
    <path d="M25 13H34V37H25Z" fill="#dcdcdc" />
  </svg>
);
const CopilotIcon = () => (
  <svg width="60" height="52" viewBox="0 0 60 52">
    <defs>
      <linearGradient id="cpA" x1="0" y1="0" x2="0" y2="1"><stop offset="0" stopColor="#2bb8f0" /><stop offset=".35" stopColor="#0a8fe0" /><stop offset=".65" stopColor="#4fb46a" /><stop offset="1" stopColor="#f5cf20" /></linearGradient>
      <linearGradient id="cpB" x1="0" y1="0" x2="0" y2="1"><stop offset="0" stopColor="#a650f0" /><stop offset=".5" stopColor="#f0568c" /><stop offset="1" stopColor="#ffa95c" /></linearGradient>
      <linearGradient id="cpC" x1="0" y1="0" x2="1" y2="1"><stop offset="0" stopColor="#1238b8" /><stop offset="1" stopColor="#2b6af0" /></linearGradient>
      <linearGradient id="cpD" x1="0" y1="0" x2="1" y2="1"><stop offset="0" stopColor="#ff8a4c" /><stop offset="1" stopColor="#e0452c" /></linearGradient>
    </defs>
    <path d="M26 13 30 2Q32 0 35 0H38C42 0 44 3 45 7 46 11 47 13 51 13H40C34 13 30 13 26 13Z" fill="url(#cpC)" />
    <path d="M34 39 30 50Q28 52 25 52H22C18 52 16 49 15 45 14 41 13 39 9 39H20C26 39 30 39 34 39Z" fill="url(#cpD)" />
    <path d="M15 0H38C33 0 31 4 29 10L23 32C21.500 37 20 39 16 39H8C1 39-1 33 1 26L6 8C8 3 10 0 15 0Z" fill="url(#cpA)" />
    <path d="M45 52H22C27 52 29 48 31 42L37 20C38.500 15 40 13 44 13H52C59 13 61 19 59 26L54 44C52 49 50 52 45 52Z" fill="url(#cpB)" />
  </svg>
);
const CommentIcon = () => <Line w={32} h={31} d="M5 1H27a4 4 0 0 1 4 4V20a4 4 0 0 1-4 4H17L9 30V24H5a4 4 0 0 1-4-4V5A4 4 0 0 1 5 1Z" />;
const ShareIcon = () => <Line w={30} h={30} d="M12 3H4a3 3 0 0 0-3 3V25a3 3 0 0 0 3 3H22a3 3 0 0 0 3-3V21M19 1 29 10 19 19V14C13 14 9 16 7 20 7 12 12 7 19 6Z" />;

/* ---------- pen marks over the screen ---------- */

const Ink = styled.svg`
  position: absolute;
  top: 0;
  left: 0;
  pointer-events: none;
`;

const Tinted = styled(Ink)<{ $mode: string }>`
  mix-blend-mode: ${(p) => p.$mode};
`;

const HIGHLIGHT = 'M1790 740V702Q1790 695 1797 695H2085C2120 694 2135 702 2170 706 2230 712 2400 712 2480 708L2500 700H2519V738C2516 750 2490 759 2462 759H2200C2150 759 2140 744 2095 743L1850 741Z';

const Marks = () => (
  <>
    <Tinted $mode="multiply" width="2672" height="1324"><path d={HIGHLIGHT} fill="#ffd966" /></Tinted>
    <Tinted $mode="screen" width="2672" height="1324"><path d={HIGHLIGHT} fill="#1a0e00" /></Tinted>
    <Ink width="2672" height="1324" fill="none" stroke="#177ffb" strokeWidth="10" strokeLinecap="round" strokeLinejoin="round">
      <path d="M1785 721V1310" />
      <path d="M1788 721C1793 738 1803 751 1825 754H1938L1961 757H2155C2150 763 2155 766 2164 766H2302L2326 760H2340L2362 754H2382L2417 747 2480 739H2538C2562 741 2570 748 2584 754L2608 762Q2613 766 2613 772V832C2608 870 2590 890 2583 925 2574 960 2577 980 2577 1017 2581 1035 2580 1050 2580 1098" />
      <path d="M2576 1094C2571 1105 2572 1120 2572 1163 2577 1190 2574 1205 2583 1228 2590 1255 2602 1265 2605 1296" />
      <path d="M1797 1294H2628" />
    </Ink>
    <Ink width="2672" height="1324">
      <path d="M1608 382H1636C1655 374 1680 371 1710 371 1800 367 1900 366 1993 365 2060 366 2120 371 2180 377 2260 382 2330 383 2380 387 2395 391 2402 397 2414 400H2427Q2433 401 2433 405.500T2427 411H2414C2402 414 2396 420 2380 422 2260 428 2150 431 2050 432 1980 431 1900 431 1870 428 1845 423 1825 425 1810 426 1760 430 1680 430 1650 420H1633Q1628 419 1628 415C1616 414 1611 407 1614 399 1604 399 1600 395 1600 389 1601 384 1604 382 1608 382Z" fill="#000" />
    </Ink>
  </>
);

/* ---------- page ---------- */

const StripRows = () => (
  <Strip>
    <thead>
      <StripRow $h={33}>
        <StripCell $rule="2px solid #8a8a8a"><Corner width="16" height="15" viewBox="0 0 16 15"><path d="M16 0V15H0Z" fill="#444" /></Corner></StripCell>
      </StripRow>
      <StripRow $h={22}><StripCell>1</StripCell></StripRow>
      <StripRow $h={112}><StripCell $on>2</StripCell></StripRow>
      <StripRow $h={44}><StripCell>4</StripCell></StripRow>
      <StripRow $h={25}><StripCell>5</StripCell></StripRow>
      <StripRow $h={24}><StripCell>6</StripCell></StripRow>
      <StripRow $h={22}><StripCell>7</StripCell></StripRow>
    </thead>
    <tbody>
      {Array.from({ length: 24 }, (_, i) => (
        <tr key={i}><StripCell>{i + 8}</StripCell></tr>
      ))}
    </tbody>
  </Strip>
);

const Excel = () => (
  <ExcelWindow>
    <TitleBar>
      <Lights>
        <Light $c="#ff5f57" aria-label="Close window" />
        <Light $c="#febc2e" aria-label="Minimize" />
        <Light $c="#28c840" aria-label="Zoom" />
      </Lights>
      <AutoSave>AutoSave<Toggle type="checkbox" /></AutoSave>
      <QuickBar>
        <IconButton aria-label="Home"><HomeIcon /></IconButton>
        <IconButton aria-label="Save"><SaveIcon /></IconButton>
        <IconButton aria-label="Save as"><SaveEditIcon /></IconButton>
        <IconButton aria-label="Undo"><UndoIcon /><Chevron /></IconButton>
        <IconButton aria-label="Redo"><RedoIcon /></IconButton>
        <IconButton aria-label="More"><MoreIcon /></IconButton>
      </QuickBar>
      <IconButton aria-label="Search"><SearchIcon /></IconButton>
    </TitleBar>
    <Tabs>
      {['Home', 'Insert', 'Draw', 'Page Layout', 'Formulas', 'Data', 'Review', 'View'].map((t) => (
        <Tab key={t} $on={t === 'Home'}>{t}</Tab>
      ))}
      <TabActions>
        <PillButton><CommentIcon />Comments</PillButton>
        <PillButton $green><ShareIcon />Share</PillButton>
      </TabActions>
    </Tabs>
    <Ribbon>
      <PasteGroup $w={209}>
        <BigButton $dim><BigIcon $tight><PasteIcon /><Chevron dim /></BigIcon>Paste</BigButton>
        <ClipTools>
          <IconButton aria-label="Cut"><CutIcon /></IconButton>
          <IconButton aria-label="Copy"><CopyIcon /><Chevron /></IconButton>
          <IconButton aria-label="Format painter"><BrushIcon /></IconButton>
        </ClipTools>
      </PasteGroup>
      <Group $w={138}><BigButton><BigIcon><Glyph>A</Glyph><Chevron /></BigIcon>Font</BigButton></Group>
      <Group $w={152}><BigButton><BigIcon><AlignIcon /><Chevron /></BigIcon>Alignment</BigButton></Group>
      <Group $w={138}><BigButton><BigIcon><Glyph>%</Glyph><Chevron /></BigIcon>Number</BigButton></Group>
      <StyleGroup $w={354}>
        <StyleButton><CondIcon />Conditional Formatting <Chevron /></StyleButton>
        <StyleButton><TableBrushIcon />Format as Table <Chevron /></StyleButton>
        <StyleButton><TableBrushIcon full />Cell Styles <Chevron /></StyleButton>
      </StyleGroup>
      <Group $w={138}><BigButton><BigIcon><CellsIcon /><Chevron /></BigIcon>Cells</BigButton></Group>
      <Group $w={138}><BigButton><BigIcon><EditIcon /><Chevron /></BigIcon>Editing</BigButton></Group>
      <Group $w={128}><BigButton><BigIcon><AddinsIcon /></BigIcon>Add-ins</BigButton></Group>
      <Group>
        <BigButton $w={106}><BigIcon><AnalyzeIcon /></BigIcon>Analyze<br />Data</BigButton>
        <BigButton><BigIcon><CopilotIcon /></BigIcon>Copilot</BigButton>
      </Group>
    </Ribbon>
    <FormulaBar>
      <NameBox aria-label="Name box" defaultValue="J4" />
      <svg width="14" height="36" viewBox="0 0 14 36" fill="#c8c8c8"><path d="M7 0 14 12H0ZM7 36 14 24H0Z" /></svg>
      <FormulaIcons>
        <Line w={20} h={20} sw={4} d="M3 3 17 17M17 3 3 17" />
        <Line w={28} h={20} sw={4} d="M2 10 10 18 26 2" />
        <Fx>fx</Fx>
      </FormulaIcons>
      <FormulaInput aria-label="Formula" defaultValue="Adjustments" />
    </FormulaBar>
    <Sheet />
  </ExcelWindow>
);

export default function App() {
  return (
    <Desktop>
      <Global />
      <JournalWindow><Journal /></JournalWindow>
      <AccountsWindow>
        <Paper>
          {accountRows.map((row, i) => (
            <AccountRow key={i}>
              {row.map((a, j) => (
                <TAccount key={j} a={a} open={i === 2} />
              ))}
            </AccountRow>
          ))}
        </Paper>
      </AccountsWindow>
      <BackSheetWindow><StripRows /></BackSheetWindow>
      <BrowserWindow>
        <BarRule />
        <AutoFillBar>
          <p>AutoFill can assist with filling out this form.</p>
          <AutoFillButton>AutoFill Form</AutoFillButton>
          <IconButton aria-label="Close"><Line w={20} h={20} sw={2} d="M1 1 19 19M19 1 1 19" /></IconButton>
        </AutoFillBar>
        <PageArea><Ledger /></PageArea>
      </BrowserWindow>
      <Excel />
      <Marks />
    </Desktop>
  );
}
